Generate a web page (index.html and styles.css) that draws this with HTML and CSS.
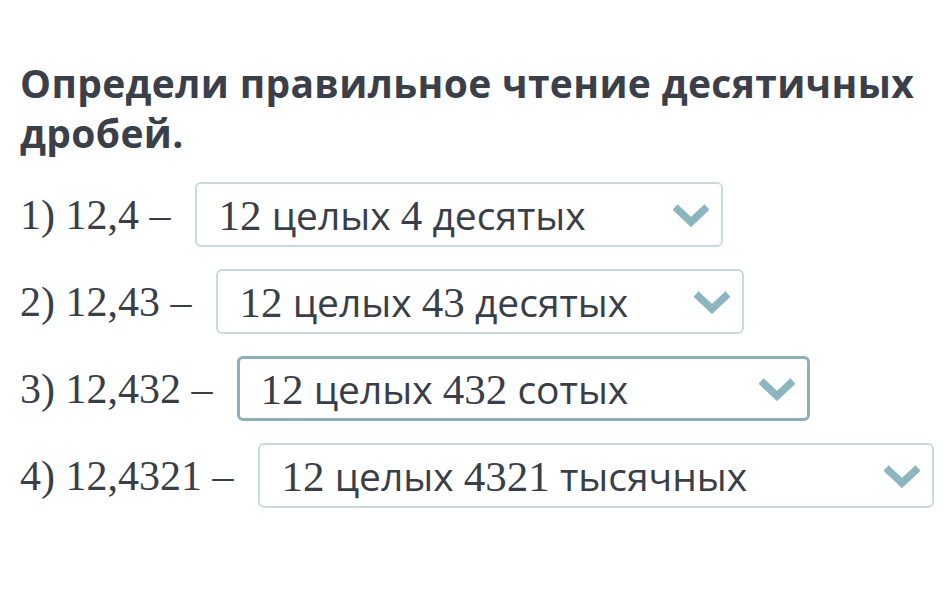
FILE: index.html
```html
<!DOCTYPE html>
<html lang="ru">
<head>
<meta charset="utf-8">
<link rel="stylesheet" href="styles.css">
</head>
<body>
<main class="task">
  <h1 class="title">Определи правильное чтение десятичных дробей.</h1>
  <div class="rows">
    <div class="row">
      <span class="label">1) 12,4 –</span>
      <div class="select w1"><span class="value"><span class="num">12</span> целых <span class="num">4</span> десятых</span><svg class="chev" viewBox="0 0 36 24"><path d="M2 4 L18 19 L34 4" /></svg></div>
    </div>
    <div class="row">
      <span class="label">2) 12,43 –</span>
      <div class="select w1"><span class="value"><span class="num">12</span> целых <span class="num">43</span> десятых</span><svg class="chev" viewBox="0 0 36 24"><path d="M2 4 L18 19 L34 4" /></svg></div>
    </div>
    <div class="row">
      <span class="label">3) 12,432 –</span>
      <div class="select w3 focused"><span class="value"><span class="num">12</span> целых <span class="num">432</span> сотых</span><svg class="chev" viewBox="0 0 36 24"><path d="M2 4 L18 19 L34 4" /></svg></div>
    </div>
    <div class="row">
      <span class="label">4) 12,4321 –</span>
      <div class="select w4"><span class="value"><span class="num">12</span> целых <span class="num">4321</span> тысячных</span><svg class="chev" viewBox="0 0 36 24"><path d="M2 4 L18 19 L34 4" /></svg></div>
    </div>
  </div>
</main>
</body>
</html>
```
FILE: styles.css
```css
html, body {
  margin: 0;
  padding: 0;
  background: #ffffff;
}
.task {
  padding: 58px 0 0 20px;
  color: #393e48;
}
.title {
  margin: 0;
  font-family: "Open Sans", "Noto Sans", sans-serif;
  font-weight: 700;
  font-size: 39px;
  line-height: 50px;
  color: #3a3f49;
  letter-spacing: 0.35px;
}
.rows {
  margin-top: 24px;
  display: flex;
  flex-direction: column;
  gap: 22px;
}
.row {
  display: flex;
  align-items: center;
  gap: 24px;
}
.label {
  font-family: "Liberation Serif", serif;
  font-size: 42px;
  color: #393e48;
  white-space: nowrap;
}
.select {
  box-sizing: border-box;
  height: 65px;
  border: 2px solid #c9dadd;
  border-radius: 6px;
  display: flex;
  align-items: center;
  justify-content: space-between;
  padding: 0 12px 0 22px;
  background: #fff;
}
.select.focused {
  border: 3px solid #8eafb9;
  padding-left: 21px;
}
.w1 { width: 528px; }
.w3 { width: 573px; }
.w4 { width: 676px; }
.value {
  font-family: "Open Sans", "Noto Sans", sans-serif;
  font-size: 39px;
  color: #393e48;
  white-space: nowrap;
}
.num {
  font-family: "Liberation Serif", serif;
  font-size: 43px;
}
.chev {
  width: 36px;
  height: 24px;
  flex: none;
}
.chev path {
  fill: none;
  stroke: #8cb6bf;
  stroke-width: 7.5;
  stroke-linecap: butt;
  stroke-linejoin: miter;
}
```
